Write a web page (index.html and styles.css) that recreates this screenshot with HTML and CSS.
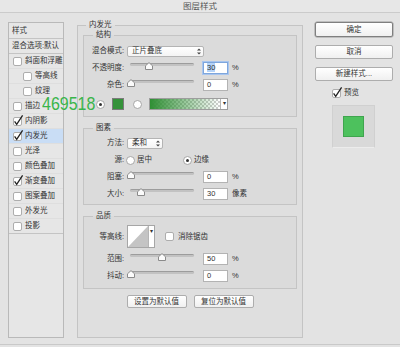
FILE: index.html
```html
<!DOCTYPE html>
<html lang="zh">
  <head>
    <meta charset="UTF-8" />
    <title>图层样式</title>
    <link rel="stylesheet" href="styles.css">
  </head>
  <body>
    <div class="titlebar">图层样式</div>

    <div class="dialog">
      <ul class="fx-list">
        <li class="fx-head">样式</li>
        <li class="fx-head">混合选项:默认</li>
        <li class="fx-item"><span class="check"></span>斜面和浮雕</li>
        <li class="fx-item sub"><span class="check"></span>等高线</li>
        <li class="fx-item sub"><span class="check"></span>纹理</li>
        <li class="fx-item"><span class="check"></span>描边</li>
        <li class="fx-item"><span class="check"><svg width="9" height="9" viewBox="0 0 9 9"><path d="M1.6 4.4 L3.7 7.3 L9.6 -1.6"/></svg></span>内阴影</li>
        <li class="fx-item active"><span class="check"><svg width="9" height="9" viewBox="0 0 9 9"><path d="M1.6 4.4 L3.7 7.3 L9.6 -1.6"/></svg></span>内发光</li>
        <li class="fx-item"><span class="check"></span>光泽</li>
        <li class="fx-item"><span class="check"></span>颜色叠加</li>
        <li class="fx-item"><span class="check"><svg width="9" height="9" viewBox="0 0 9 9"><path d="M1.6 4.4 L3.7 7.3 L9.6 -1.6"/></svg></span>渐变叠加</li>
        <li class="fx-item"><span class="check"></span>图案叠加</li>
        <li class="fx-item"><span class="check"></span>外发光</li>
        <li class="fx-item"><span class="check"></span>投影</li>
      </ul>

      <fieldset class="group effect">
        <legend>内发光</legend>

        <fieldset class="group section">
          <legend>结构</legend>
          <div class="row">
            <span class="label">混合模式:</span>
            <div class="select blend">
              <span>正片叠底</span>
              <svg width="4" height="7" viewBox="0 0 4 7"><path d="M0 2.6 L2 0.4 L4 2.6 Z M0 4.4 L2 6.6 L4 4.4 Z"/></svg>
            </div>
          </div>
          <div class="row">
            <span class="label">不透明度:</span>
            <div class="slider">
              <div class="track"></div>
              <svg class="thumb" style="left: 30%" width="8" height="8" viewBox="0 0 8 8"><path d="M0.5 7.5 V3.8 L4 0.6 L7.5 3.8 V7.5 Z"/></svg>
            </div>
            <div class="field focus"><span class="picked">30</span></div>
            <span class="unit">%</span>
          </div>
          <div class="row">
            <span class="label">杂色:</span>
            <div class="slider">
              <div class="track"></div>
              <svg class="thumb" style="left: 2%" width="8" height="8" viewBox="0 0 8 8"><path d="M0.5 7.5 V3.8 L4 0.6 L7.5 3.8 V7.5 Z"/></svg>
            </div>
            <div class="field">0</div>
            <span class="unit">%</span>
          </div>
          <div class="row swatches">
            <span class="radio on"></span>
            <span class="swatch"></span>
            <span class="radio"></span>
            <div class="ramp">
              <span class="ramp-fill"></span>
              <span class="drop">▾</span>
            </div>
          </div>
        </fieldset>

        <fieldset class="group section">
          <legend>图素</legend>
          <div class="row">
            <span class="label">方法:</span>
            <div class="select method">
              <span>柔和</span>
              <svg width="4" height="7" viewBox="0 0 4 7"><path d="M0 2.6 L2 0.4 L4 2.6 Z M0 4.4 L2 6.6 L4 4.4 Z"/></svg>
            </div>
          </div>
          <div class="row">
            <span class="label">源:</span>
            <span class="option"><span class="radio"></span>居中</span>
            <span class="option"><span class="radio on"></span>边缘</span>
          </div>
          <div class="row">
            <span class="label">阻塞:</span>
            <div class="slider">
              <div class="track"></div>
              <svg class="thumb" style="left: 2%" width="8" height="8" viewBox="0 0 8 8"><path d="M0.5 7.5 V3.8 L4 0.6 L7.5 3.8 V7.5 Z"/></svg>
            </div>
            <div class="field">0</div>
            <span class="unit">%</span>
          </div>
          <div class="row">
            <span class="label">大小:</span>
            <div class="slider">
              <div class="track"></div>
              <svg class="thumb" style="left: 17%" width="8" height="8" viewBox="0 0 8 8"><path d="M0.5 7.5 V3.8 L4 0.6 L7.5 3.8 V7.5 Z"/></svg>
            </div>
            <div class="field">30</div>
            <span class="unit">像素</span>
          </div>
        </fieldset>

        <fieldset class="group section">
          <legend>品质</legend>
          <div class="row tall">
            <span class="label">等高线:</span>
            <div class="contour">
              <svg width="20" height="21" viewBox="0 0 20 21"><path d="M0 21 L20 0 V21 Z" fill="#c4c4c4"/></svg>
              <span class="drop">▾</span>
            </div>
            <span class="check"></span>
            <span class="check-text">消除锯齿</span>
          </div>
          <div class="row">
            <span class="label">范围:</span>
            <div class="slider">
              <div class="track"></div>
              <svg class="thumb" style="left: 50%" width="8" height="8" viewBox="0 0 8 8"><path d="M0.5 7.5 V3.8 L4 0.6 L7.5 3.8 V7.5 Z"/></svg>
            </div>
            <div class="field">50</div>
            <span class="unit">%</span>
          </div>
          <div class="row">
            <span class="label">抖动:</span>
            <div class="slider">
              <div class="track"></div>
              <svg class="thumb" style="left: 1%" width="8" height="8" viewBox="0 0 8 8"><path d="M0.5 7.5 V3.8 L4 0.6 L7.5 3.8 V7.5 Z"/></svg>
            </div>
            <div class="field">0</div>
            <span class="unit">%</span>
          </div>
        </fieldset>

        <div class="defaults">
          <button>设置为默认值</button>
          <button>复位为默认值</button>
        </div>
      </fieldset>

      <div class="side">
        <button class="primary">确定</button>
        <button>取消</button>
        <button>新建样式...</button>
        <div class="preview-toggle">
          <span class="check"><svg width="9" height="9" viewBox="0 0 9 9"><path d="M1.6 4.4 L3.7 7.3 L9.6 -1.6"/></svg></span>
          预览
        </div>
        <div class="preview"><span class="preview-chip"></span></div>
      </div>
    </div>

    <div class="tag">469518</div>
  </body>
</html>
```

FILE: styles.css
```css
* {
  box-sizing: border-box;
}
body {
  margin: 0;
  width: 400px;
  height: 347px;
  overflow: hidden;
  position: relative;
  background: #e3e3e3;
  font-family: "Liberation Sans", "Noto Sans CJK SC", sans-serif;
  font-size: 7.5px;
  line-height: 10px;
  color: #333;
}
.titlebar {
  height: 13px;
  border-bottom: 1px solid #cbcbcb;
  background: #e7e7e7;
  text-align: center;
  font-size: 8.5px;
  line-height: 12px;
  color: #555;
}
.dialog {
  display: flex;
  align-items: flex-start;
  height: 332px;
  padding-left: 8px;
  border-bottom: 1px solid #c9c9c9;
}

/* left effect list */
.fx-list {
  width: 56px;
  height: 316px;
  margin: 9px 0 0;
  padding: 0;
  list-style: none;
  border: 1px solid #b9b9b9;
  background: #e6e6e6;
}
.fx-head {
  height: 16px;
  padding-left: 3px;
  line-height: 15px;
  border-bottom: 1px solid #c4c4c4;
}
.fx-head + .fx-head {
  height: 15px;
  line-height: 14px;
}
.fx-item {
  display: flex;
  align-items: center;
  height: 15px;
  padding-left: 4px;
  border-bottom: 1px solid #dedede;
}
.fx-item:last-child {
  border-bottom-color: #c4c4c4;
}
.fx-item.sub {
  padding-left: 14px;
}
.fx-item.active {
  background: #c9ddf5;
}
.fx-item .check {
  margin-right: 3px;
}
.check {
  display: inline-block;
  flex: none;
  width: 9px;
  height: 9px;
  background: #fff;
  border: 1px solid #adadad;
  border-radius: 2px;
}
.check svg {
  display: block;
  margin: -1px 0 0 -1px;
  overflow: visible;
}
.check path {
  fill: none;
  stroke: #222;
  stroke-width: 1.3;
}

/* grouped boxes */
.group {
  margin: 0;
  padding: 0;
  min-width: 0;
  border: 1px solid #c4c4c4;
  background: rgba(0, 0, 0, 0.015);
}
.group legend {
  margin-left: 9px;
  padding: 0 3px;
  line-height: 10px;
}
.effect {
  width: 226px;
  margin: 7px 0 0 13px;
  padding: 0 5px 29px;
}
.effect > legend {
  margin-left: 3px;
}
.section {
  padding: 4px 0 4px;
}
.section:first-of-type {
  padding: 5px 0 6px;
}
.section + .section {
  margin-top: 6px;
}
.section:last-of-type {
  padding-bottom: 6px;
}
.row {
  display: flex;
  align-items: center;
  height: 12px;
  margin-top: 5px;
}
.row:first-of-type {
  margin-top: 0;
}
.row.swatches {
  margin-top: 7px;
  padding-left: 12px;
}
.row.tall {
  height: 23px;
}
.label {
  flex: none;
  width: 40px;
  text-align: right;
}

/* controls */
.select {
  display: flex;
  align-items: center;
  justify-content: space-between;
  height: 11px;
  margin-left: 3px;
  padding: 0 2px 0 4px;
  border: 1px solid #b4b4b4;
  border-radius: 2px;
  background: linear-gradient(#fff, #f4f4f4);
}
.select svg {
  fill: #444;
}
.select.blend {
  width: 77px;
}
.select.method {
  width: 36px;
}
.slider {
  position: relative;
  flex: none;
  width: 64px;
  height: 12px;
  margin-left: 6px;
}
.track {
  height: 3px;
  margin-top: 1px;
  border-radius: 2px;
  background: #c2c2c2;
  border-top: 1px solid #9c9c9c;
}
.thumb {
  position: absolute;
  top: 0;
  margin-left: -4px;
}
.thumb path {
  fill: #fbfbfb;
  stroke: #8a8a8a;
  stroke-width: 1;
}
.field {
  flex: none;
  width: 25px;
  height: 12px;
  margin-left: 9px;
  padding-left: 3px;
  line-height: 10px;
  background: #fff;
  border: 1px solid #b3b3b3;
}
.field.focus {
  border-color: #7ea6dc;
  box-shadow: 0 0 0 1px #a8c5ee;
}
.picked {
  background: #b4d3f8;
}
.unit {
  margin-left: 4px;
}
.radio {
  flex: none;
  display: flex;
  align-items: center;
  justify-content: center;
  width: 9px;
  height: 9px;
  border: 1px solid #a6a6a6;
  border-radius: 50%;
  background: #fff;
}
.radio.on::after {
  content: "";
  width: 3px;
  height: 3px;
  border-radius: 50%;
  background: #333;
}
.swatch {
  flex: none;
  width: 12px;
  height: 12px;
  margin: 0 9px 0 7px;
  background: #35923a;
  border: 1px solid #7b7b7b;
}
.ramp {
  display: flex;
  width: 79px;
  height: 12px;
  margin-left: 7px;
  border: 1px solid #9d9d9d;
}
.ramp-fill {
  flex: 1;
  background: linear-gradient(to right, #2f8f34, rgba(47, 143, 52, 0)),
    repeating-conic-gradient(#cfcfcf 0 25%, #fff 0 50%) 0 0 / 4px 4px;
}
.drop {
  width: 7px;
  border-left: 1px solid #b5b5b5;
  background: #fff;
  font-size: 6px;
  line-height: 9px;
  text-align: center;
  color: #333;
}
.option {
  display: flex;
  align-items: center;
  margin-left: 2px;
}
.option .radio {
  margin-right: 2px;
}
.option + .option {
  margin-left: 31px;
}
.contour {
  display: flex;
  flex: none;
  width: 28px;
  height: 23px;
  margin-left: 3px;
  border: 1px solid #a6a6a6;
  background: #fff;
}
.contour svg {
  display: block;
}
.contour .drop {
  width: 6px;
  line-height: 10px;
}
.row.tall .check {
  margin-left: 10px;
}
.check-text {
  margin-left: 4px;
}

/* buttons */
button {
  padding: 0;
  font: inherit;
  color: #333;
  border: 1px solid #adadad;
  border-radius: 2px;
  background: linear-gradient(#fff, #f0f0f0);
}
.defaults {
  display: flex;
  justify-content: center;
  gap: 7px;
  margin-top: 6px;
}
.defaults button {
  width: 60px;
  height: 13px;
  line-height: 11px;
}

/* right column */
.side {
  display: flex;
  flex-direction: column;
  width: 78px;
  margin: 9px 0 0 12px;
}
.side button {
  height: 14px;
  margin-top: 8px;
  line-height: 12px;
}
.side .primary {
  height: 15px;
  margin-top: 0;
  border-color: #7f7f7f;
  box-shadow: 0 0 0 0.5px #9a9a9a;
}
.preview-toggle {
  display: flex;
  align-items: center;
  gap: 3px;
  height: 10px;
  margin-top: 7px;
  padding-left: 17px;
}
.preview {
  display: flex;
  align-items: center;
  justify-content: center;
  width: 43px;
  height: 43px;
  margin: 7px 0 0 17px;
  background: #d9d9d9;
  border: 1px solid #d0d0d0;
  border-bottom-color: #ececec;
}
.preview-chip {
  width: 21px;
  height: 21px;
  background: #4dc15d;
  border: 1px solid #3fa54e;
}

/* annotation laid over the dialog */
.tag {
  position: absolute;
  left: 42px;
  top: 99px;
  font-family: "Liberation Sans", sans-serif;
  font-size: 19px;
  line-height: 10px;
  color: #39b54a;
  transform: scaleX(0.84);
  transform-origin: left center;
}
```
